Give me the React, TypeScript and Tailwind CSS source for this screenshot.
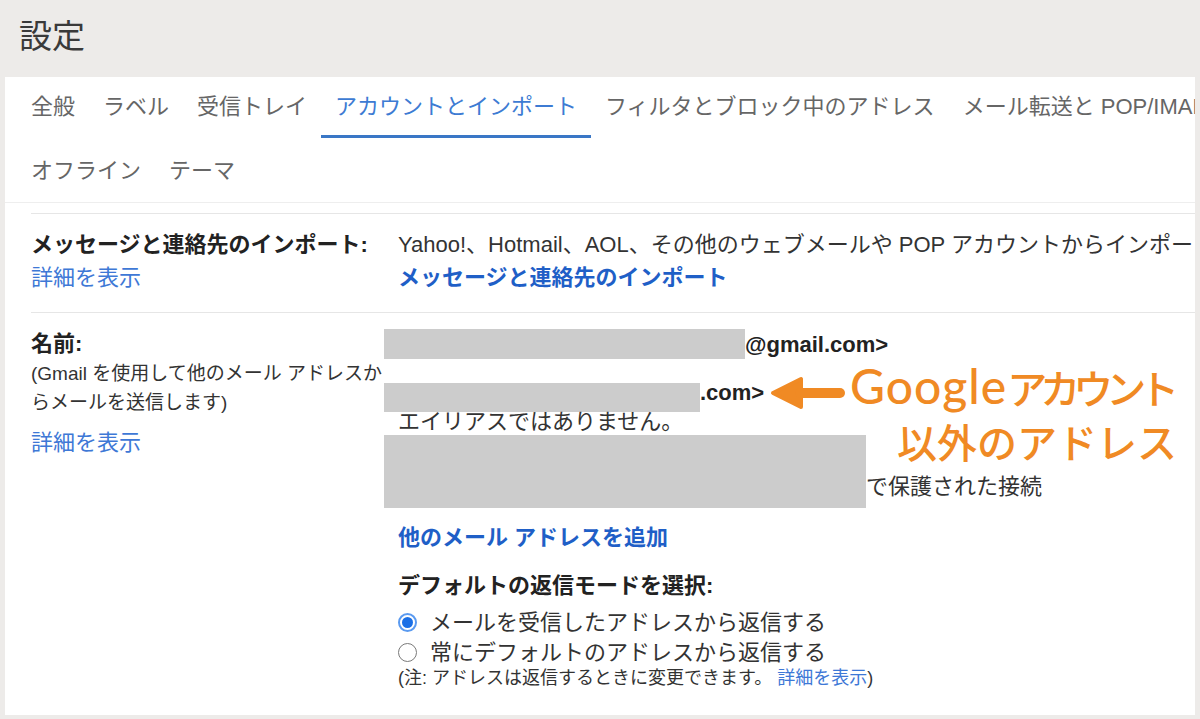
import React from 'react';

const tabsTop = ['全般', 'ラベル', '受信トレイ', 'アカウントとインポート', 'フィルタとブロック中のアドレス', 'メール転送と POP/IMAP'];
const tabsBottom = ['オフライン', 'テーマ'];

function Tab({ label, active }: { label: string; active?: boolean }) {
  return (
    <div
      className={`shrink-0 flex items-center px-[14px] border-b-[3px] whitespace-nowrap ${
        active ? 'border-[#3a77c6] text-[#3d7bd3]' : 'border-transparent text-[#666666]'
      }`}
    >
      {label}
    </div>
  );
}

function Radio({ checked }: { checked?: boolean }) {
  if (checked) {
    return (
      <span className="w-[19px] h-[19px] rounded-full border-2 border-[#5a9af0] bg-white flex items-center justify-center shrink-0">
        <span className="w-[11px] h-[11px] rounded-full bg-[#1a6fe6]" />
      </span>
    );
  }
  return <span className="w-[19px] h-[19px] rounded-full border border-[#7a7a7a] bg-white shrink-0" />;
}

export default function App() {
  return (
    <div className="relative w-full h-[719px] overflow-hidden bg-[#edebe9] font-[family-name:'Liberation_Sans','Noto_Sans_CJK_JP',sans-serif]">
      <header className="h-[77px] flex items-center pl-[19px] pb-[3px] text-[33px] text-[#3a3a3a]">設定</header>

      <section className="mx-[5px] h-[638px] bg-white overflow-hidden">
        {/* tabs */}
        <div className="pl-[12px] border-b border-[#eeeeee] text-[22px]">
          <div className="flex h-[61px]">
            {tabsTop.map(t => (
              <Tab key={t} label={t} active={t === 'アカウントとインポート'} />
            ))}
          </div>
          <div className="flex h-[64px]">
            {tabsBottom.map(t => (
              <div key={t} className="shrink-0 flex items-center px-[14px] text-[#666666]">
                {t}
              </div>
            ))}
          </div>
        </div>

        {/* settings table */}
        <div className="ml-[26px] mt-[10px] border-t border-[#e6e6e6] text-[22px] text-[#333333]">
          <div className="flex pt-[14px] pb-[18px] border-b border-[#e6e6e6] leading-[33px]">
            <div className="w-[367px] shrink-0">
              <div className="font-bold text-[#222222]">メッセージと連絡先のインポート:</div>
              <div className="text-[#3e78d6]">詳細を表示</div>
            </div>
            <div className="whitespace-nowrap">
              <div>Yahoo!、Hotmail、AOL、その他のウェブメールや POP アカウントからインポート</div>
              <div className="font-bold text-[#1f5fc7]">メッセージと連絡先のインポート</div>
            </div>
          </div>

          <div className="flex pt-[16px]">
            <div className="w-[367px] shrink-0">
              <div className="font-bold text-[#222222] leading-[30px]">名前:</div>
              <div className="text-[19px] leading-[29px] text-[#333333]">(Gmail を使用して他のメール アドレスからメールを送信します)</div>
              <div className="mt-[10px] leading-[32px] text-[#3e78d6]">詳細を表示</div>
            </div>
            <div className="whitespace-nowrap">
              <div className="flex items-center h-[30px]">
                <span className="-ml-[14px] w-[361px] h-[30px] bg-[#cccccc]" />
                <span className="font-bold text-[#222222]">@gmail.com&gt;</span>
              </div>
              <div className="flex items-start mt-[24px] h-[29px]">
                <span className="-ml-[14px] w-[316px] h-[29px] bg-[#cccccc]" />
                <span className="font-bold text-[#222222] leading-[20px]">.com&gt;</span>
              </div>
              <div className="leading-[20px]">エイリアスではありません。</div>
              <div className="flex items-end mt-[3px]">
                <span className="-ml-[14px] w-[482px] h-[73px] bg-[#cccccc]" />
                <span className="leading-[30px] pb-[6px]">で保護された接続</span>
              </div>
              <div className="mt-[14px] leading-[32px] font-bold text-[#1f5fc7]">他のメール アドレスを追加</div>
              <div className="mt-[16px] leading-[32px] font-bold text-[#222222]">デフォルトの返信モードを選択:</div>
              <div className="mt-[5px] flex items-center gap-[13px] h-[30px]">
                <Radio checked />
                <span>メールを受信したアドレスから返信する</span>
              </div>
              <div className="flex items-center gap-[13px] h-[30px]">
                <Radio />
                <span>常にデフォルトのアドレスから返信する</span>
              </div>
              <div className="text-[18px] leading-[22px]">
                (注: アドレスは返信するときに変更できます。 <span className="text-[#3e78d6]">詳細を表示</span>)
              </div>
            </div>
          </div>
        </div>
      </section>

      {/* annotation */}
      <svg className="absolute left-[770px] top-[376px]" width="76" height="34" viewBox="0 0 76 34">
        <path d="M3 17 L31 3 L31 31 Z" fill="#f08a24" stroke="#f08a24" strokeWidth="4" strokeLinejoin="round" />
        <line x1="30" y1="17" x2="70" y2="17" stroke="#f08a24" strokeWidth="10" strokeLinecap="round" />
      </svg>
      <div className="absolute left-[850px] top-[360px] whitespace-nowrap text-[#f08a24] leading-[52px]">
        <span className="font-['Lato',sans-serif] font-medium text-[48px] tracking-[1px]">Google</span>
        <span className="font-['Noto_Sans_CJK_JP',sans-serif] font-medium text-[40px] tracking-[-7px]">アカウント</span>
      </div>
      <div className="absolute left-[897px] top-[416px] whitespace-nowrap text-[#f08a24] font-['Noto_Sans_CJK_JP',sans-serif] font-medium text-[40px] leading-[50px]">
        以外のアドレス
      </div>
    </div>
  );
}
